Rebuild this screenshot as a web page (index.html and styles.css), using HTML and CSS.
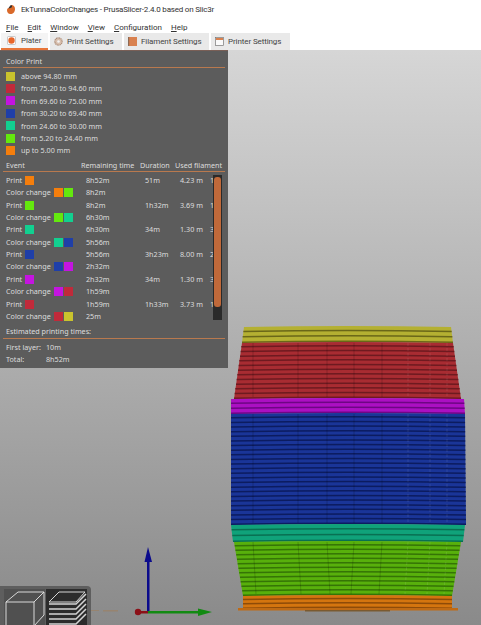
FILE: index.html
```html
<!DOCTYPE html>
<html lang="en">
<head>
  <meta charset="UTF-8">
  <title>EkTunnaColorChanges - PrusaSlicer-2.4.0 based on Slic3r</title>
  <link rel="stylesheet" href="styles.css">
</head>
<body>

<header class="titlebar">
  <svg class="app-logo" viewBox="0 0 8 9" width="8" height="9">
    <path d="M4 0 C7 0 8 2 8 4 C8 7 6 9 3.5 9 C1 9 0 7 0 5 C0 3 2 3 3 2 Z" fill="#d9692a"/>
    <path d="M4 0 C3 1 2 2 1.500 3.500 C3 3 4.500 3 5 2 C5.200 1.200 4.800 .4 4 0 Z" fill="#333"/>
  </svg>
  <span>EkTunnaColorChanges - PrusaSlicer-2.4.0 based on Slic3r</span>
</header>

<nav class="menubar">
  <span><u>F</u>ile</span>
  <span><u>E</u>dit</span>
  <span><u>W</u>indow</span>
  <span><u>V</u>iew</span>
  <span><u>C</u>onfiguration</span>
  <span><u>H</u>elp</span>
</nav>

<div class="tabs">
  <div class="tab tab-active tab-plater">
    <svg viewBox="0 0 9 9" width="9" height="9">
      <rect x=".5" y=".5" width="8" height="8" rx="1" fill="#fff" stroke="#aaa" stroke-width=".6"/>
      <circle cx="4.500" cy="4.500" r="3.200" fill="#e8662a"/>
    </svg>
    <span>Plater</span>
  </div>
  <div class="tab tab-print">
    <svg viewBox="0 0 9 9" width="9" height="9">
      <circle cx="4.500" cy="4.500" r="3.700" fill="#d8bfae" stroke="#a98a76" stroke-width="1.200" stroke-dasharray="1 .6"/>
      <circle cx="4.500" cy="4.500" r="1.300" fill="#f3f3f3"/>
    </svg>
    <span>Print Settings</span>
  </div>
  <div class="tab tab-filament">
    <svg viewBox="0 0 9 9" width="9" height="9">
      <rect x="0" y="0" width="9" height="9" fill="#d9814f"/>
      <rect x="0" y="0" width="1.200" height="9" fill="#8d6b55"/>
    </svg>
    <span>Filament Settings</span>
  </div>
  <div class="tab tab-printer">
    <svg viewBox="0 0 9 9" width="9" height="9">
      <rect x=".5" y=".5" width="8" height="8" fill="#fafafa" stroke="#777" stroke-width=".7"/>
      <rect x="1" y="1" width="7" height="2" fill="#d9814f"/>
    </svg>
    <span>Printer Settings</span>
  </div>
</div>

<main class="scene">
  <canvas id="view" width="481" height="575"></canvas>

  <section class="preview-panel">
    <div class="panel-title">Color Print</div>
    <ul class="legend">
      <li><i class="swatch c-yellow"></i>above 94.80 mm</li>
      <li><i class="swatch c-red"></i>from 75.20 to 94.60 mm</li>
      <li><i class="swatch c-purple"></i>from 69.60 to 75.00 mm</li>
      <li><i class="swatch c-blue"></i>from 30.20 to 69.40 mm</li>
      <li><i class="swatch c-teal"></i>from 24.60 to 30.00 mm</li>
      <li><i class="swatch c-green"></i>from 5.20 to 24.40 mm</li>
      <li><i class="swatch c-orange"></i>up to 5.00 mm</li>
    </ul>

    <div class="event-row event-head">
      <span>Event</span>
      <span>Remaining time</span>
      <span>Duration</span>
      <span>Used filament</span>
    </div>

    <div class="event-wrap">
      <div class="event-list">
        <div class="event-row"><span>Print <i class="swatch c-orange"></i></span><span>8h52m</span><span>51m</span><span>4.23 m</span><span>1</span></div>
        <div class="event-row"><span>Color change <i class="swatch c-orange"></i><i class="swatch c-green"></i></span><span>8h2m</span></div>
        <div class="event-row"><span>Print <i class="swatch c-green"></i></span><span>8h2m</span><span>1h32m</span><span>3.69 m</span><span>1</span></div>
        <div class="event-row"><span>Color change <i class="swatch c-green"></i><i class="swatch c-teal"></i></span><span>6h30m</span></div>
        <div class="event-row"><span>Print <i class="swatch c-teal"></i></span><span>6h30m</span><span>34m</span><span>1.30 m</span><span>3</span></div>
        <div class="event-row"><span>Color change <i class="swatch c-teal"></i><i class="swatch c-blue"></i></span><span>5h56m</span></div>
        <div class="event-row"><span>Print <i class="swatch c-blue"></i></span><span>5h56m</span><span>3h23m</span><span>8.00 m</span><span>2</span></div>
        <div class="event-row"><span>Color change <i class="swatch c-blue"></i><i class="swatch c-purple"></i></span><span>2h32m</span></div>
        <div class="event-row"><span>Print <i class="swatch c-purple"></i></span><span>2h32m</span><span>34m</span><span>1.30 m</span><span>3</span></div>
        <div class="event-row"><span>Color change <i class="swatch c-purple"></i><i class="swatch c-red"></i></span><span>1h59m</span></div>
        <div class="event-row"><span>Print <i class="swatch c-red"></i></span><span>1h59m</span><span>1h33m</span><span>3.73 m</span><span>1</span></div>
        <div class="event-row"><span>Color change <i class="swatch c-red"></i><i class="swatch c-yellow"></i></span><span>25m</span></div>
      </div>
      <div class="scrollbar"><div class="scroll-thumb"></div></div>
    </div>

    <div class="panel-title panel-title-times">Estimated printing times:</div>
    <div class="time-row"><span>First layer:</span><span>10m</span></div>
    <div class="time-row"><span>Total:</span><span>8h52m</span></div>
  </section>

  <div class="view-toolbar">
    <button class="view-btn" aria-label="Perspective">
      <svg viewBox="0 0 41 36" width="41" height="36" fill="none" stroke="#e8e8e8" stroke-width=".9">
        <path d="M2 13 L14 3 L40 3 L40 26 L30 37 M2 13 L30 13 L30 37 M2 13 L2 37 M30 13 L40 3"/>
      </svg>
    </button>
    <button class="view-btn view-btn-on" aria-label="Layers">
      <svg viewBox="0 0 41 36" width="41" height="36" fill="none" stroke="#e8e8e8" stroke-width=".9">
        <path d="M3 13 L13 3 L39 3 L30 13 Z"/>
        <g stroke-width="1.500" stroke="#d4d4d4">
          <path d="M3 15 H30 L40 5"/>
          <path d="M3 20 H30 L40 10"/>
          <path d="M3 25 H30 L40 15"/>
          <path d="M3 30 H30 L40 20"/>
          <path d="M3 35 H30 L40 25"/>
        </g>
      </svg>
    </button>
  </div>
</main>

<script src="scene.js"></script>
</body>
</html>
```

FILE: styles.css
```css
* {
  box-sizing: border-box;
}

html, body {
  height: 100%;
}

body {
  margin: 0;
  width: 481px;
  height: 625px;
  overflow: hidden;
  background: #fff;
  display: flex;
  flex-direction: column;
  font-family: "Noto Sans", sans-serif;
  color: #222;
}

.titlebar, .menubar, .tabs {
  flex: none;
  font-family: Roboto, sans-serif;
  font-size: 8px;
  white-space: nowrap;
}

.titlebar {
  height: 18px;
  display: flex;
  align-items: center;
  gap: 6px;
  padding: 1px 0 0 7px;
  color: #333;
  letter-spacing: -0.2px;
}

.menubar {
  height: 15px;
  display: flex;
  align-items: center;
  gap: 9px;
  padding: 4px 0 0 6px;
  color: #333;
}

.tabs {
  height: 17px;
  display: flex;
  gap: 2px;
  padding-left: 1px;
  color: #444;
  letter-spacing: -0.1px;
}

.tab {
  display: flex;
  align-items: center;
  gap: 4px;
  padding-left: 4px;
  background: #e9e9e9;
}

.tab-active {
  gap: 5px;
  padding-left: 6px;
  background: #f4f4f4;
  border-bottom: 2px solid #e8763a;
}

.tab-plater { width: 47px; }
.tab-print { width: 72px; }
.tab-filament { width: 85px; }
.tab-printer { width: 79px; }

.scene {
  flex: 1;
  position: relative;
  overflow: hidden;
  background: linear-gradient(#d6d6d6, #8a8a8a);
}

#view {
  display: block;
}

.preview-panel {
  position: absolute;
  top: 0;
  left: 0;
  width: 228px;
  height: 318px;
  padding: 4px 3px 0;
  background: #5c5c5c;
  border-top: 1px solid #7a5f56;
  font-size: 7.2px;
  line-height: 12.4px;
  color: #dcdcdc;
}

.panel-title {
  height: 13px;
  padding-left: 3px;
  border-bottom: 1px solid #b9794e;
}

.legend {
  list-style: none;
  margin: 2px 0 3px;
  padding: 0 0 0 3px;
}

.legend li {
  height: 12.4px;
  display: flex;
  align-items: center;
  gap: 6px;
}

.swatch {
  display: inline-block;
  width: 9px;
  height: 9px;
  vertical-align: -2px;
}

.event-row .swatch + .swatch {
  margin-left: 1px;
}

.event-row span:first-child .swatch:first-of-type {
  margin-left: 1px;
}

.c-yellow { background: #c9c32d; }
.c-red { background: #c02a3a; }
.c-purple { background: #c414e0; }
.c-blue { background: #1f3fa8; }
.c-teal { background: #12d090; }
.c-green { background: #64e80e; }
.c-orange { background: #f57e0c; }

.event-row {
  display: grid;
  grid-template-columns: 80px 59px 35px 30px 10px;
  height: 12.4px;
  padding-left: 3px;
  white-space: nowrap;
  overflow: hidden;
}

.event-head {
  grid-template-columns: 75px 59px 35px 50px;
  height: 13px;
  margin-top: -1px;
  border-bottom: 1px solid #b9794e;
}

.event-wrap {
  display: flex;
  padding-top: 2px;
  height: 149px;
}

.event-list {
  width: 210px;
}

.event-list .event-row {
  width: 210px;
}

.scrollbar {
  width: 9px;
  height: 145px;
  margin-top: 1px;
  padding: 2px 1px 0;
  background: #2a2a2a;
}

.scroll-thumb {
  height: 130px;
  border-radius: 3px;
  background: #c0693a;
}

.panel-title-times {
  height: 14px;
  margin-top: 4px;
}

.time-row {
  display: flex;
  padding-left: 3px;
  height: 12.4px;
}

.panel-title-times + .time-row {
  margin-top: 2px;
}

.time-row span:first-child {
  width: 40px;
}

.view-toolbar {
  position: absolute;
  left: 0;
  bottom: 0;
  width: 91px;
  height: 39px;
  display: flex;
  gap: 1px;
  padding: 3px 3px 0 4px;
  background: #5e5e5e;
  border-top-right-radius: 4px;
}

.view-btn {
  width: 41px;
  height: 36px;
  padding: 0;
  border: 0;
  background: #505050;
  overflow: hidden;
}

.view-btn svg {
  display: block;
}

.view-btn-on {
  background: #2c2c2c;
}
```

FILE: scene.js
```js
const canvas = document.getElementById("view");
const ctx = canvas.getContext("2d");

// page y minus the 50px of bars above the canvas
const TOP = 50;

// one band per colour change: [yTop, yBottom, leftTop, leftBottom, rightTop, rightBottom, layers, colour, dark]
const bands = [
  [326, 342, 244, 242, 451, 453, 3, "#b4b032", "#6a6718"],
  [342, 398, 242, 234, 453, 461, 12, "#a82c32", "#6e1a20"],
  [398, 413, 231, 231, 464, 465, 3, "#ab10c2", "#6e0684"],
  [413, 524, 231, 231, 465, 466, 24, "#1a3598", "#0c1c60"],
  [524, 541, 231, 233, 465, 463, 3, "#10a27a", "#097052"],
  [541, 595, 234, 243, 461, 452, 12, "#58b00c", "#357406"],
  [595, 608, 243, 243, 452, 452, 3, "#d4750f", "#8e4b08"]
];

const seams = [253, 298, 327, 354, 382, 408, 430, 447];

function layerLine(x1, x2, y, color, width) {
  ctx.beginPath();
  ctx.moveTo(x1, y + 1);
  ctx.quadraticCurveTo((x1 + x2) / 2, y - 1, x2, y + 1);
  ctx.strokeStyle = color;
  ctx.lineWidth = width;
  ctx.stroke();
}

function drawBand(b) {
  const [y1, y2, l1, l2, r1, r2, layers, color, dark] = b;

  ctx.beginPath();
  ctx.moveTo(l1, y1 + 1);
  ctx.quadraticCurveTo((l1 + r1) / 2, y1 - 1, r1, y1 + 1);
  ctx.lineTo(r2, y2 + 1);
  ctx.quadraticCurveTo((l2 + r2) / 2, y2 - 1, l2, y2 + 1);
  ctx.closePath();
  ctx.fillStyle = color;
  ctx.fill();

  const h = (y2 - y1) / layers;
  for (let i = 1; i <= layers; i++) {
    const t = i / layers;
    const y = y1 + h * i - 0.8;
    layerLine(l1 + (l2 - l1) * t, r1 + (r2 - r1) * t, y, dark, 1.5);
  }
}

function drawSeams() {
  ctx.lineWidth = 0.8;
  for (const x of seams) {
    ctx.strokeStyle = x < 400 ? "rgba(0,0,0,0.22)" : "rgba(255,255,255,0.12)";
    ctx.setLineDash(x < 400 ? [] : [3, 2]);
    ctx.beginPath();
    ctx.moveTo(x, 343);
    ctx.lineTo(x, 397);
    ctx.moveTo(x, 414);
    ctx.lineTo(x, 523);
    ctx.moveTo(x, 542);
    ctx.lineTo(x + (x < 348 ? 3 : -3), 594);
    ctx.stroke();
  }
  ctx.setLineDash([]);
}

function drawBrim() {
  ctx.fillStyle = "#bf6a14";
  ctx.fillRect(238, 608, 220, 2.5);
  ctx.fillStyle = "#7a5a30";
  ctx.fillRect(305, 610, 85, 1.5);
}

function drawAxes() {
  ctx.fillStyle = "rgba(160,125,90,0.55)";
  ctx.fillRect(88, 610, 11, 1);
  ctx.fillRect(103, 610, 15, 1.5);

  ctx.fillStyle = "#0b0b8c";
  ctx.fillRect(147, 560, 2.5, 52);
  ctx.beginPath();
  ctx.moveTo(148, 547);
  ctx.lineTo(152, 562);
  ctx.lineTo(144.5, 562);
  ctx.closePath();
  ctx.fill();

  ctx.fillStyle = "#128a12";
  ctx.fillRect(148, 611, 52, 2.5);
  ctx.beginPath();
  ctx.moveTo(212, 612);
  ctx.lineTo(198, 608.5);
  ctx.lineTo(198, 616);
  ctx.closePath();
  ctx.fill();

  ctx.fillStyle = "#8c1018";
  ctx.fillRect(138, 611, 10, 2.5);
  ctx.beginPath();
  ctx.arc(138, 612, 3.2, 0, 2 * Math.PI);
  ctx.fill();
}

ctx.translate(0, -TOP);
ctx.filter = "blur(0.45px)";
bands.forEach(drawBand);
drawSeams();
drawBrim();
drawAxes();
```
